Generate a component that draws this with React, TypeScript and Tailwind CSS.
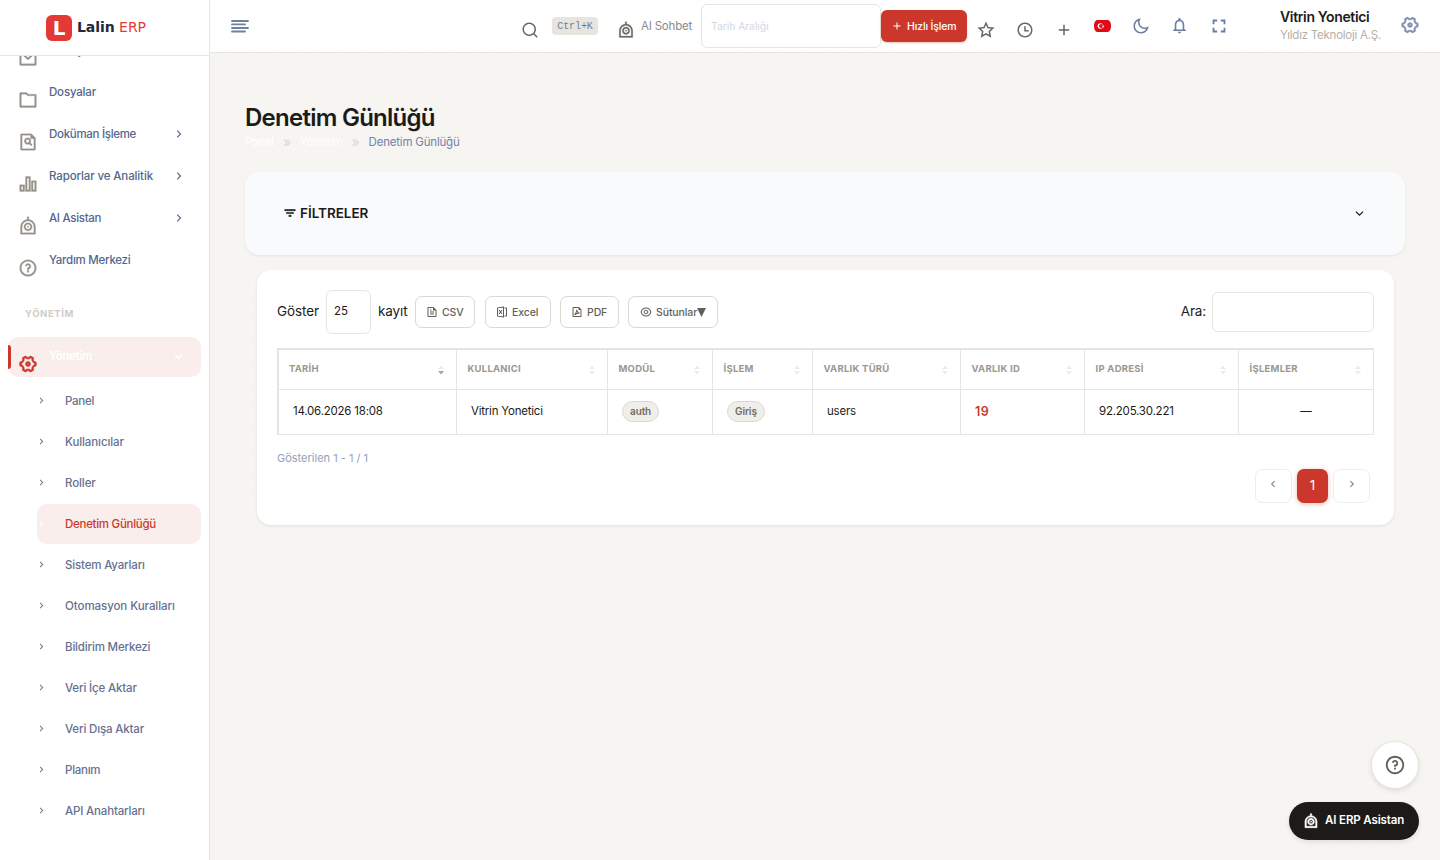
import type { ReactNode } from "react";
import { MdFullscreen, MdNotificationsNone } from "react-icons/md";
import {
  RiAddLine,
  RiArrowDownSLine,
  RiArrowLeftSLine,
  RiArrowRightSLine,
  RiBarChart2Line,
  RiEyeLine,
  RiFileExcel2Line,
  RiFilePdf2Line,
  RiFileSearchLine,
  RiFileTextLine,
  RiFilter3Line,
  RiFolderLine,
  RiMailLine,
  RiMoonLine,
  RiQuestionLine,
  RiRobotLine,
  RiSearchLine,
  RiSettings4Line,
  RiStarLine,
  RiTimeLine,
} from "react-icons/ri";

const menu = [
  { label: "Mesajlar", icon: RiMailLine, arrow: false, tracking: "tracking-[-0.12px]" },
  { label: "Dosyalar", icon: RiFolderLine, arrow: false, tracking: "tracking-[-0.18px]" },
  { label: "Doküman İşleme", icon: RiFileSearchLine, arrow: true, tracking: "tracking-[-0.3px]" },
  { label: "Raporlar ve Analitik", icon: RiBarChart2Line, arrow: true, tracking: "tracking-[-0.12px]" },
  { label: "AI Asistan", icon: RiRobotLine, arrow: true, tracking: "tracking-[-0.3px]" },
  { label: "Yardım Merkezi", icon: RiQuestionLine, arrow: false, tracking: "tracking-[-0.26px]" },
];

const subMenu = [
  { label: "Panel", tracking: "tracking-[-0.25px]" },
  { label: "Kullanıcılar", tracking: "tracking-[-0.1px]" },
  { label: "Roller", tracking: "tracking-[-0.1px]" },
  { label: "Denetim Günlüğü", tracking: "tracking-[-0.28px]" },
  { label: "Sistem Ayarları", tracking: "tracking-[-0.17px]" },
  { label: "Otomasyon Kuralları", tracking: "tracking-[-0.06px]" },
  { label: "Bildirim Merkezi", tracking: "tracking-[-0.17px]" },
  { label: "Veri İçe Aktar", tracking: "tracking-[-0.16px]" },
  { label: "Veri Dışa Aktar", tracking: "tracking-[-0.16px]" },
  { label: "Planım", tracking: "tracking-[-0.25px]" },
  { label: "API Anahtarları", tracking: "tracking-[-0.17px]" },
];

function Logo() {
  return (
    <div className="flex h-[56px] shrink-0 items-center border-b border-[#e7e5df] pl-[46px]">
      <div className="flex h-[26px] w-[26px] items-center justify-center rounded-[6px] bg-[#e53935] font-['DejaVu_Sans',sans-serif] text-[20px] leading-none font-bold text-white">
        L
      </div>
      <div className="-mt-[2px] ml-[5px] font-['DejaVu_Sans',sans-serif] text-[14px] leading-none tracking-[-0.05px] whitespace-pre">
        <span className="font-bold text-[#1e293b]">Lalin</span>
        <span className="text-[#e53935]"> ERP</span>
      </div>
    </div>
  );
}

function Sidebar() {
  return (
    <aside className="flex h-full w-[210px] shrink-0 flex-col border-r border-[#e7e5df] bg-white">
      <Logo />
      <nav className="flex min-h-0 flex-1 flex-col overflow-hidden px-2">
        <div className="-mt-[25px] flex shrink-0 flex-col gap-[2px]">
          {menu.map(({ label, icon: Icon, arrow, tracking }, i) => (
            <div key={label} className="flex h-10 items-start pr-[15px] pl-[10px]">
              <Icon className="mt-[17px] h-5 w-5 stroke-current stroke-[0.3] text-[#969188]" />
              <span
                className={`${tracking} ${i === 0 ? "pt-3" : "pt-[11px]"} ml-[11px] text-[11.5px] leading-4 font-medium text-[#52678b]`}
              >
                {label}
              </span>
              {arrow && <RiArrowRightSLine className="mt-3 ml-auto h-[14px] w-[14px] text-[#52678b]" />}
            </div>
          ))}
        </div>
        <div className="mt-[25px] shrink-0 pl-[17px] text-[9.5px] leading-4 font-bold tracking-[0.6px] text-[#cfcdc7]">
          YÖNETİM
        </div>
        <div className="mt-[15px] flex h-10 shrink-0 items-start rounded-[10px] bg-[#faeeec] pr-[15px]">
          <div className="mt-2 h-6 w-[3px] rounded-r-[3px] bg-[#cb382b]" />
          <RiSettings4Line className="mt-[17px] ml-[7px] h-5 w-5 stroke-current stroke-[0.8] text-[#cb382b]" />
          <span className="ml-[11px] pt-[11px] text-[11.5px] leading-4 font-semibold tracking-[-0.35px] text-white">
            Yönetim
          </span>
          <RiArrowDownSLine className="mt-3 ml-auto h-[15px] w-[15px] text-white" />
        </div>
        <div className="mt-1 ml-[29px] flex shrink-0 flex-col gap-px">
          {subMenu.map(({ label, tracking }) => {
            const active = label === "Denetim Günlüğü";
            return (
              <div
                key={label}
                className={
                  active
                    ? "flex h-10 items-center rounded-[10px] bg-[#faeeec] text-[#cb382b]"
                    : "flex h-10 items-center text-[#66718f]"
                }
              >
                <RiArrowRightSLine
                  className={active ? "-mt-[2px] -ml-px h-[11px] w-[11px] text-white" : "-mt-[2px] -ml-px h-[11px] w-[11px]"}
                />
                <span className={`${tracking} ml-[18px] text-[11.5px] leading-4 font-medium`}>{label}</span>
              </div>
            );
          })}
        </div>
      </nav>
    </aside>
  );
}

function TurkishFlag() {
  return (
    <svg viewBox="0 0 17 12" className="h-3 w-[17px]">
      <path d="M3 0h11Q17 1 17 6t-3 6H3Q0 11 0 6T3 0z" fill="#e30a17" />
      <circle cx="6.4" cy="6" r="2.7" fill="#fff" />
      <circle cx="7.1" cy="6" r="2.1" fill="#e30a17" />
      <path d="M9.6 5 9 5.800l-1-.2.6.9-.6.8 1-.2.6.8V7l.9-.4-.9-.4z" fill="#fff" />
    </svg>
  );
}

function Header() {
  return (
    <header className="flex h-[53px] shrink-0 items-start border-b border-[#e7e5df] bg-white">
      <svg
        viewBox="0 0 18 14"
        className="mt-5 ml-[21px] h-[14px] w-[18px] shrink-0"
        stroke="#71829f"
        strokeWidth="1.8"
        strokeLinecap="round"
      >
        <path d="M1 1h16M1 4.400h13M1 8h16M1 11.500h13" />
      </svg>
      <RiSearchLine className="mt-[21px] ml-[272px] h-[18px] w-[18px] shrink-0 text-[#6a675f]" />
      <div className="mt-[17px] ml-[13px] flex h-[18px] w-[46px] shrink-0 items-center justify-center rounded-[4px] bg-[#e8e5de] font-['Liberation_Mono',monospace] text-[10px] tracking-[-0.1px] text-[#6b7da3]">
        Ctrl+K
      </div>
      <RiRobotLine className="mt-[21px] ml-[19px] h-[18px] w-[18px] shrink-0 stroke-current stroke-[0.3] text-[#6a675f]" />
      <span className="mt-[18px] ml-[6px] w-[60px] shrink-0 text-[11.5px] leading-4 tracking-[-0.2px] whitespace-nowrap text-[#8a8a8a]">
        AI Sohbet
      </span>
      <div className="mt-1 flex h-11 w-[180px] shrink-0 items-center rounded-[6px] border border-[#e7e5df] px-[9px] pt-px text-[10.5px] tracking-[-0.1px] text-[#d3d9e3]">
        Tarih Aralığı
      </div>
      <div className="mt-[10px] flex h-8 w-[86px] shrink-0 items-center rounded-[6px] bg-[#cb382b] pl-[10px] text-white shadow-[0_1px_2px_rgba(203,56,43,0.3)]">
        <RiAddLine className="h-3 w-3" />
        <span className="ml-[4px] pt-px text-[10.5px] font-medium tracking-[-0.15px] whitespace-nowrap">Hızlı İşlem</span>
      </div>
      <RiStarLine className="mt-[21px] ml-[10px] h-[18px] w-[18px] shrink-0 text-[#6a675f]" />
      <RiTimeLine className="mt-[21px] ml-[21px] h-[18px] w-[18px] shrink-0 text-[#6a675f]" />
      <RiAddLine className="mt-[21px] ml-[21px] h-[18px] w-[18px] shrink-0 text-[#6a675f]" />
      <div className="mt-5 ml-[21px] shrink-0">
        <TurkishFlag />
      </div>
      <RiMoonLine className="mt-[17px] ml-[21px] h-[18px] w-[18px] shrink-0 text-[#6b7da3]" />
      <MdNotificationsNone className="mt-4 ml-5 h-[19px] w-[19px] shrink-0 text-[#6b7da3]" />
      <MdFullscreen className="mt-[15px] ml-[19px] h-[22px] w-[22px] shrink-0 text-[#6b7da3]" />
      <div className="mt-[8px] ml-[50px] w-[120px] shrink-0 whitespace-nowrap">
        <div className="text-[14px] leading-[18px] font-semibold tracking-[-0.35px] text-[#1c1b19]">Vitrin Yonetici</div>
        <div className="text-[11.5px] leading-[18px] tracking-[-0.24px] text-[#b3b0a9]">Yıldız Teknoloji A.Ş.</div>
      </div>
      <RiSettings4Line className="mt-[15px] h-5 w-5 shrink-0 stroke-current stroke-[0.5] text-[#7f90b0]" />
    </header>
  );
}

function ExportButton({ width, icon, children }: { width: string; icon: ReactNode; children: ReactNode }) {
  return (
    <button
      className={`${width} flex h-8 shrink-0 items-center rounded-[7px] border border-[#dbd8d0] bg-white pl-[10px] text-[10.5px] font-medium tracking-[-0.1px] whitespace-nowrap text-[#625f57]`}
    >
      {icon}
      <span className="ml-[4px] flex items-center pt-px">{children}</span>
    </button>
  );
}

function SortMark({ active }: { active: boolean }) {
  return (
    <svg viewBox="0 0 6 10" className="mt-[2px] ml-auto h-[10px] w-[6px]">
      <path d="M0 4 3 0.500 6 4z" fill="#ecebe9" />
      <path d="M0 6 3 9.500 6 6z" fill={active ? "#aaa69d" : "#ecebe9"} />
    </svg>
  );
}

const columns = [
  { title: "TARİH", width: "w-[178px]" },
  { title: "KULLANICI", width: "w-[151px]" },
  { title: "MODÜL", width: "w-[105px]" },
  { title: "İŞLEM", width: "w-[100px]" },
  { title: "VARLIK TÜRÜ", width: "w-[148px]" },
  { title: "VARLIK ID", width: "w-[124px]" },
  { title: "IP ADRESİ", width: "w-[154px]" },
  { title: "İŞLEMLER", width: "w-[135px]" },
];

function Pill({ children }: { children: ReactNode }) {
  return (
    <span className="inline-flex h-[21px] items-center rounded-full border border-[#dbd8d0] bg-[#f0eee9] px-[7px] text-[10px] font-semibold tracking-[-0.1px] text-[#6f6c64]">
      {children}
    </span>
  );
}

function LogTable() {
  const cell = "h-[45px] border-r border-b border-[#e7e5df] px-[14px] py-0 align-middle";
  return (
    <table className="mt-[14px] w-[1097px] table-fixed border-separate border-spacing-0 border-t-2 border-l-2 border-[#e7e3df]">
      <thead>
        <tr>
          {columns.map((c, i) => (
            <th
              key={c.title}
              className={`${c.width} ${i === 0 ? "pl-[10px]" : "pl-[10.5px]"} h-10 border-r border-b border-[#e7e5df] pr-[12px] pb-[2px] text-left align-middle`}
            >
              <div className="flex items-center text-[9.5px] leading-4 font-bold tracking-[0.25px] text-[#9c978d]">
                {c.title}
                <SortMark active={i === 0} />
              </div>
            </th>
          ))}
        </tr>
      </thead>
      <tbody className="text-[11.5px] tracking-[-0.22px] text-[#1c1b19]">
        <tr>
          <td className={cell}>14.06.2026 18:08</td>
          <td className={cell}>Vitrin Yonetici</td>
          <td className={`${cell} pb-px`}>
            <Pill>auth</Pill>
          </td>
          <td className={`${cell} pb-px`}>
            <Pill>Giriş</Pill>
          </td>
          <td className={cell}>users</td>
          <td className={cell}>
            <span className="text-[12.5px] font-semibold tracking-[0.4px] text-[#cb382b]">19</span>
          </td>
          <td className={cell}>92.205.30.221</td>
          <td className={`${cell} text-center`}>—</td>
        </tr>
      </tbody>
    </table>
  );
}

function Main() {
  return (
    <main className="flex min-h-0 flex-1 flex-col bg-[radial-gradient(circle_at_1px_1px,rgba(28,27,25,0.014)_1px,transparent_1px)] bg-[length:22px_22px] bg-[position:20px_1px] px-[35px]">
      <h1 className="mt-[50px] text-[24px] leading-[30px] font-semibold tracking-[-0.74px] text-[#1c1b19]">Denetim Günlüğü</h1>
      <div className="mt-px flex h-4 items-center text-[11.5px] leading-4 tracking-[-0.2px] text-white">
        <span>Panel</span>
        <span className="mx-[9px] text-[14px] text-[#d9d7d2]">»</span>
        <span>Yönetim</span>
        <span className="mx-[9px] text-[14px] text-[#d9d7d2]">»</span>
        <span className="text-[#7482a8]">Denetim Günlüğü</span>
      </div>
      <section className="mt-[22px] flex h-[83px] shrink-0 items-center rounded-[14px] bg-[#f9fafc] px-[38px] shadow-[0_1px_3px_rgba(28,27,25,0.07)]">
        <RiFilter3Line className="-mt-px h-[14px] w-[14px] stroke-current stroke-1 text-[#1c1b19]" />
        <span className="ml-[3px] text-[13.5px] font-semibold tracking-[-0.02px] text-[#1c1b19]">FİLTRELER</span>
        <RiArrowDownSLine className="ml-auto h-[15px] w-[15px] text-[#1c1b19]" />
      </section>
      <section className="mt-[15px] ml-3 flex h-[255px] w-[1137px] shrink-0 flex-col rounded-[14px] bg-white px-5 pt-5 shadow-[0_1px_3px_rgba(28,27,25,0.1)]">
        <div className="flex h-11 items-center text-[13.5px] text-[#1c1b19]">
          <span className="-mt-[2px] w-[49px] tracking-[-0.1px]">Göster</span>
          <div className="flex h-11 w-[45px] items-center rounded-[6px] border border-[#e7e5df] pl-[7px] text-[11.5px] tracking-[-0.1px]">
            25
          </div>
          <span className="-mt-[2px] ml-[7px] w-[37px] tracking-[-0.1px]">kayıt</span>
          <div className="flex">
            <ExportButton width="w-[60px]" icon={<RiFileTextLine className="h-3 w-3" />}>
              CSV
            </ExportButton>
            <div className="w-[10px]" />
            <ExportButton width="w-[66px]" icon={<RiFileExcel2Line className="h-3 w-3" />}>
              Excel
            </ExportButton>
            <div className="w-[9px]" />
            <ExportButton width="w-[59px]" icon={<RiFilePdf2Line className="h-3 w-3" />}>
              PDF
            </ExportButton>
            <div className="w-[9px]" />
            <ExportButton width="w-[90px]" icon={<RiEyeLine className="ml-px h-3 w-3" />}>
              Sütunlar
              <svg viewBox="0 0 9 9" className="h-[9px] w-[9px]" fill="currentColor">
                <path d="M0 0h9L4.500 9z" />
              </svg>
            </ExportButton>
          </div>
          <span className="-mt-px ml-auto tracking-[-0.15px]">Ara:</span>
          <div className="ml-[6px] h-10 w-[162px] rounded-[6px] border border-[#e7e5df]" />
        </div>
        <LogTable />
        <div className="mt-[15px] text-[11px] leading-4 tracking-[0px] text-[#94a1ba]">Gösterilen 1 - 1 / 1</div>
        <div className="mt-[3px] mr-1 flex h-[34px] justify-end gap-[5px]">
          <div className="flex h-[34px] w-[37px] justify-center rounded-[7px] border border-[#eeede9] pt-[8px] pr-[2px] text-[#8a8a8a]">
            <RiArrowLeftSLine className="h-3 w-3 stroke-current stroke-[0.5]" />
          </div>
          <div className="flex h-[34px] w-[31px] items-center justify-center rounded-[7px] bg-[#cb382b] pb-px text-[13.5px] text-white shadow-[0_1px_5px_rgba(203,56,43,0.35)]">
            1
          </div>
          <div className="flex h-[34px] w-[37px] justify-center rounded-[7px] border border-[#eeede9] pt-[8px] text-[#8a8a8a]">
            <RiArrowRightSLine className="h-3 w-3 stroke-current stroke-[0.5]" />
          </div>
        </div>
      </section>
    </main>
  );
}

function FloatingActions() {
  return (
    <div className="absolute right-[21px] bottom-5 flex flex-col items-end gap-[13px]">
      <div className="flex h-12 w-12 items-center justify-center rounded-full border border-[#e7e5df] bg-white text-[#625f57] shadow-[0_2px_5px_rgba(28,27,25,0.1)]">
        <RiQuestionLine className="-mt-px h-[22px] w-[22px]" />
      </div>
      <div className="flex h-[38px] w-[130px] items-center rounded-full bg-[#1c1b19] pl-[14px] text-white shadow-[0_2px_5px_rgba(28,27,25,0.1)]">
        <RiRobotLine className="h-4 w-4 stroke-current stroke-[0.9]" />
        <span className="-mt-px ml-[6px] text-[11.5px] font-semibold tracking-[-0.13px] whitespace-nowrap">AI ERP Asistan</span>
      </div>
    </div>
  );
}

export default function App() {
  return (
    <div className="relative flex h-[860px] w-[1440px] overflow-hidden bg-[#f6f5f1] font-['Inter',sans-serif]">
      <Sidebar />
      <div className="flex min-w-0 flex-1 flex-col">
        <Header />
        <Main />
      </div>
      <FloatingActions />
    </div>
  );
}
